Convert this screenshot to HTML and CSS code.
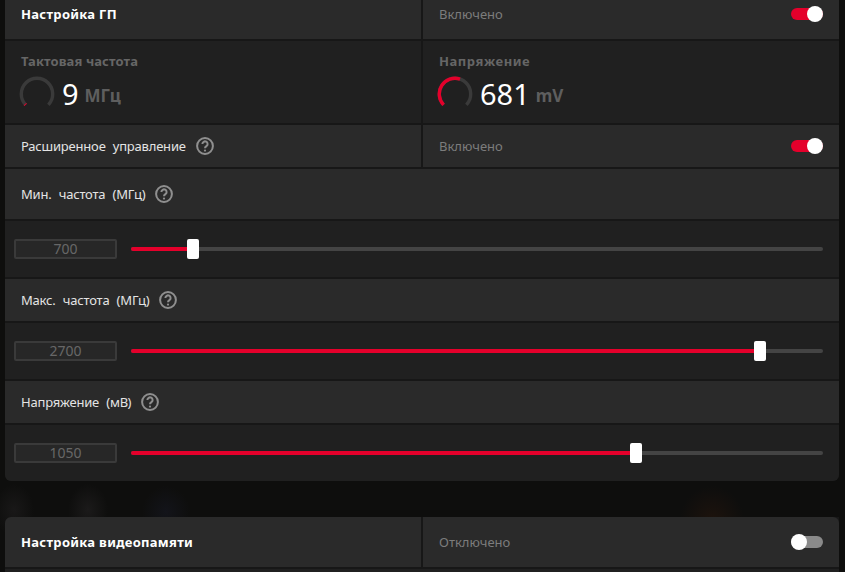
FILE: index.html
```html
<!DOCTYPE html>
<html lang="ru">
<head>
<meta charset="utf-8">
<title>Настройка ГП</title>
<link rel="stylesheet" href="styles.css">
</head>
<body>
<main class="page">
  <section class="panel panel-gpu">
    <div class="row split head-row first">
      <div class="cell"><span class="title">Настройка ГП</span></div>
      <div class="cell state"><span class="state-text">Включено</span><span class="toggle on"><i class="knob"></i></span></div>
    </div>
    <div class="row split metrics">
      <div class="metric">
        <div class="metric-label">Тактовая частота</div>
        <div class="metric-value">
          <svg class="gauge" viewBox="0 0 36 36"><path class="gauge-track" d="M6.6 28.8A15.7 15.7 0 1 1 29.4 28.8"/><path class="gauge-fill" d="M6.6 28.8L6 28.1"/></svg>
          <span class="number">9</span><span class="unit">МГц</span>
        </div>
      </div>
      <div class="metric">
        <div class="metric-label label-wide">Напряжение</div>
        <div class="metric-value">
          <svg class="gauge" viewBox="0 0 36 36"><path class="gauge-track" d="M6.6 28.8A15.7 15.7 0 1 1 29.4 28.8"/><path class="gauge-fill" d="M6.6 28.8A15.7 15.7 0 0 1 23 3.1"/></svg>
          <span class="number">681</span><span class="unit">mV</span>
        </div>
      </div>
    </div>
    <div class="row split head-row">
      <div class="cell"><span class="label">Расширенное управление</span>
        <svg class="help" viewBox="0 0 18 18"><circle cx="9" cy="9" r="7.9"/><path d="M6.4 7a2.6 2.6 0 1 1 4 2.2c-.9.6-1.4 1-1.4 2.1"/><circle class="dot" cx="9" cy="13.6" r="1.1"/></svg>
      </div>
      <div class="cell state"><span class="state-text">Включено</span><span class="toggle on"><i class="knob"></i></span></div>
    </div>
    <div class="row head-row tall">
      <div class="cell"><span class="label">Мин. частота (МГц)</span>
        <svg class="help" viewBox="0 0 18 18"><circle cx="9" cy="9" r="7.9"/><path d="M6.4 7a2.6 2.6 0 1 1 4 2.2c-.9.6-1.4 1-1.4 2.1"/><circle class="dot" cx="9" cy="13.6" r="1.1"/></svg>
      </div>
    </div>
    <div class="row slider-row">
      <div class="value-box">700</div>
      <div class="slider"><div class="fill fill-min"></div><i class="thumb"></i></div>
    </div>
    <div class="row head-row">
      <div class="cell"><span class="label">Макс. частота (МГц)</span>
        <svg class="help" viewBox="0 0 18 18"><circle cx="9" cy="9" r="7.9"/><path d="M6.4 7a2.6 2.6 0 1 1 4 2.2c-.9.6-1.4 1-1.4 2.1"/><circle class="dot" cx="9" cy="13.6" r="1.1"/></svg>
      </div>
    </div>
    <div class="row slider-row">
      <div class="value-box">2700</div>
      <div class="slider"><div class="fill fill-max"></div><i class="thumb"></i></div>
    </div>
    <div class="row head-row">
      <div class="cell"><span class="label">Напряжение (мВ)</span>
        <svg class="help" viewBox="0 0 18 18"><circle cx="9" cy="9" r="7.9"/><path d="M6.4 7a2.6 2.6 0 1 1 4 2.2c-.9.6-1.4 1-1.4 2.1"/><circle class="dot" cx="9" cy="13.6" r="1.1"/></svg>
      </div>
    </div>
    <div class="row slider-row last">
      <div class="value-box">1050</div>
      <div class="slider"><div class="fill fill-volt"></div><i class="thumb"></i></div>
    </div>
  </section>
  <section class="panel panel-mem">
    <div class="row split head-row tall rounded-top">
      <div class="cell"><span class="title">Настройка видеопамяти</span></div>
      <div class="cell state"><span class="state-text">Отключено</span><span class="toggle off"><i class="knob"></i></span></div>
    </div>
    <div class="row mem-next"></div>
  </section>
</main>
</body>
</html>
```
FILE: styles.css
```css
* { box-sizing: border-box; }
html, body { margin: 0; height: 100%; }
body {
  overflow: hidden;
  background-color: #0e0e0d;
  background-image:
    radial-gradient(ellipse 32px 34px at 712px 520px, #1d130d, transparent),
    radial-gradient(ellipse 20px 26px at 88px 510px, #1b1a1a, transparent),
    radial-gradient(ellipse 20px 26px at 14px 510px, #191818, transparent),
    radial-gradient(ellipse 24px 26px at 166px 512px, #13141a, transparent);
  font-family: "Noto Sans", "Open Sans", sans-serif;
  color: #fff;
}
.page {
  width: 834px;
  margin-left: 5px;
  display: flex;
  flex-direction: column;
  gap: 36px;
}
.panel {
  display: flex;
  flex-direction: column;
  gap: 2px;
  background: #171717;
}
.panel-gpu { border-radius: 0 0 6px 6px; }
.panel-mem { border-radius: 6px 6px 0 0; }
.row { background: #2a2a2a; }
.split {
  display: grid;
  grid-template-columns: 416px 1fr;
  column-gap: 2px;
  background: #171717;
}
.head-row { height: 42px; }
.first { height: 39px; }
.first .cell { padding-bottom: 11px; }
.tall { height: 50px; }
.head-row:not(.split) { display: flex; align-items: center; }
.cell {
  display: flex;
  align-items: center;
  height: 100%;
  padding: 0 16px;
  background: #2a2a2a;
}
.rounded-top, .rounded-top .cell:first-child { border-top-left-radius: 6px; }
.rounded-top .cell:last-child { border-top-right-radius: 6px; }
.title { font-size: 13px; font-weight: 700; letter-spacing: .3px; color: #fff; }
.label { font-size: 13px; letter-spacing: -.2px; word-spacing: 4px; color: #e4e4e4; }
.state { justify-content: space-between; }
.state-text { font-size: 13px; color: #7c7c7c; }
.toggle {
  position: relative;
  display: block;
  width: 32px;
  height: 12px;
  border-radius: 6px;
}
.toggle.on { background: #e4002b; }
.toggle.off { background: #8a8a8a; }
.knob {
  position: absolute;
  top: -2px;
  width: 16px;
  height: 16px;
  border-radius: 50%;
  background: #fff;
}
.on .knob { right: 0; }
.off .knob { left: 0; }
.help {
  width: 18px;
  height: 18px;
  margin-left: 10px;
  fill: none;
  stroke: #8f8f8f;
  stroke-width: 2;
}
.help .dot { fill: #8f8f8f; stroke: none; }
.metrics { height: 82px; }
.metric {
  background: #202020;
  padding: 10px 16px 0 16px;
}
.metric-label {
  font-size: 13px;
  font-weight: 700;
  line-height: 20px;
  letter-spacing: .1px;
  color: #666;
}
.label-wide { letter-spacing: .55px; }
.metric-value {
  display: flex;
  align-items: center;
  height: 40px;
  margin-top: 3px;
  margin-left: -2px;
}
.gauge {
  width: 36px;
  height: 36px;
  fill: none;
  stroke-width: 3.4;
  margin-right: 7px;
  flex: none;
}
.gauge-track { stroke: #3a3a3a; }
.gauge-fill { stroke: #e4002b; }
.number { font-size: 29px; line-height: 36px; color: #fff; }
.unit { font-size: 17px; font-weight: 700; color: #5e5e5e; margin-left: 6px; margin-top: 2px; }
.slider-row {
  display: flex;
  align-items: center;
  height: 56px;
  padding: 0 16px 0 9px;
  background: #202020;
}
.last { border-radius: 0 0 6px 6px; }
.value-box {
  width: 103px;
  height: 20px;
  border: 2px solid #3a3a3a;
  border-radius: 2px;
  background: #272727;
  font-size: 14px;
  line-height: 16px;
  text-align: center;
  color: #676767;
}
.slider {
  position: relative;
  flex: 1;
  height: 4px;
  margin-left: 14px;
  border-radius: 2px;
  background: #444;
  display: flex;
  align-items: center;
}
.fill { height: 4px; border-radius: 2px; background: #e4002b; }
.fill-min { width: 62px; }
.fill-max { width: 629px; }
.fill-volt { width: 505px; }
.thumb {
  display: block;
  flex: none;
  width: 12px;
  height: 20px;
  margin-left: -6px;
  border-radius: 2px;
  background: #fff;
  position: relative;
}
.mem-next { height: 10px; background: #202020; }
```
